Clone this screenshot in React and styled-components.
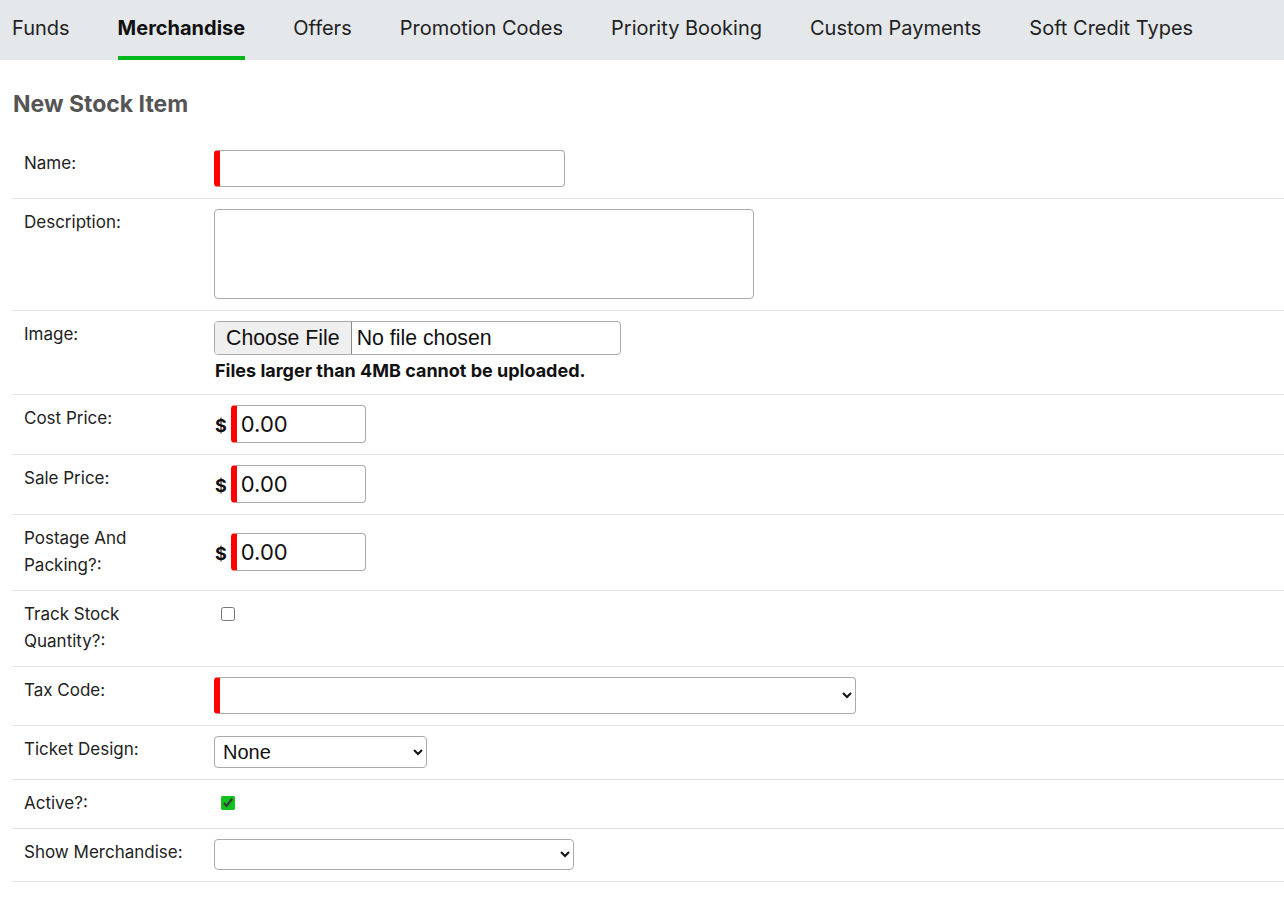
import React from "react";
import styled, { createGlobalStyle } from "styled-components";

const GlobalStyle = createGlobalStyle`
  html, body {
    margin: 0;
    padding: 0;
    background: #fff;
  }
  body {
    font-family: Inter, "Liberation Sans", Arial, sans-serif;
    color: #222;
  }
  * {
    box-sizing: border-box;
  }
`;

const TabBar = styled.ul`
  display: flex;
  gap: 48px;
  height: 60px;
  margin: 0;
  padding: 0 0 0 12px;
  list-style: none;
  background-color: #e4e8eb;
`;

const Tab = styled.li`
  display: flex;
  align-items: center;
  height: 100%;
  font-size: 20px;
  font-weight: ${(p) => (p.$active ? 700 : 400)};
  color: ${(p) => (p.$active ? "#111" : "#222")};
  border-bottom: 4px solid ${(p) => (p.$active ? "#00b81c" : "transparent")};
  white-space: nowrap;
`;

const Page = styled.div`
  padding: 0 0 0 12px;
`;

const Title = styled.h2`
  margin: 30px 0 22px 1px;
  font-size: 23px;
  font-weight: 700;
  color: #555;
`;

const FormTable = styled.div`
  display: flex;
  flex-direction: column;
`;

const Row = styled.div`
  display: grid;
  grid-template-columns: 190px 1fr;
  padding: 10px 0 11px 12px;
  border-bottom: 1px solid #e2e2e2;
`;

const Label = styled.div`
  font-size: 17px;
  line-height: 27px;
  color: #222;
  max-width: ${(p) => (p.$narrow ? "120px" : "none")};
`;

const Field = styled.div`
  display: flex;
  flex-direction: column;
  align-items: flex-start;
`;

const TextInput = styled.input`
  width: ${(p) => p.$width}px;
  height: ${(p) => p.$height || 37}px;
  padding: 0 4px;
  font-family: Inter, "Liberation Sans", Arial, sans-serif;
  font-size: 22px;
  color: #111;
  border: 1px solid #aaa;
  border-left: ${(p) => (p.$required ? "6px solid #f00" : "1px solid #aaa")};
  border-radius: 4px;
  outline: none;
`;

const TextArea = styled.textarea`
  width: 540px;
  height: 90px;
  border: 1px solid #aaa;
  border-radius: 4px;
  resize: none;
  outline: none;
`;

const FileInput = styled.input`
  width: 407px;
  height: 34px;
  font-family: "Liberation Sans", Arial, sans-serif;
  font-size: 21.3px;
  color: #111;
  border: 1px solid #aaa;
  border-radius: 4px;

  &::file-selector-button {
    height: 32px;
    margin: 0 5px 0 0;
    padding: 0 11px;
    font-family: "Liberation Sans", Arial, sans-serif;
    font-size: 21.3px;
    color: #111;
    background: #efefef;
    border: none;
    border-right: 1px solid #8a8a8a;
  }
`;

const Hint = styled.div`
  margin-top: 4px;
  margin-left: 1px;
  font-size: 18px;
  font-weight: 700;
  color: #111;
  line-height: 24px;
`;

const Money = styled.div`
  display: flex;
  align-items: center;
  gap: 4px;
`;

const Dollar = styled.span`
  padding-left: 1px;
  font-size: 18px;
  font-weight: 700;
  color: #111;
  margin-top: 2px;
`;

const Check = styled.input`
  width: 14px;
  height: 14px;
  margin: 6px 0 0 7px;
  accent-color: #12c21c;
`;

const Select = styled.select`
  width: ${(p) => p.$width}px;
  height: ${(p) => p.$height}px;
  padding: 0 4px;
  font-family: "Liberation Sans", Arial, sans-serif;
  font-size: 20px;
  color: #111;
  background: #fff;
  border: 1px solid #aaa;
  border-left: ${(p) => (p.$required ? "6px solid #f00" : "1px solid #aaa")};
  border-radius: 4px;
  outline: none;
`;

const tabs = [
  "Funds",
  "Merchandise",
  "Offers",
  "Promotion Codes",
  "Priority Booking",
  "Custom Payments",
  "Soft Credit Types",
];

const PriceRow = ({ label }) => (
  <Row>
    <Label $narrow>{label}</Label>
    <Money>
      <Dollar>$</Dollar>
      <TextInput $width={135} $height={38} $required defaultValue="0.00" />
    </Money>
  </Row>
);

export default function App() {
  return (
    <>
      <GlobalStyle />
      <TabBar>
        {tabs.map((t) => (
          <Tab key={t} $active={t === "Merchandise"}>
            {t}
          </Tab>
        ))}
      </TabBar>
      <Page>
        <Title>New Stock Item</Title>
        <FormTable>
          <Row>
            <Label>Name:</Label>
            <Field>
              <TextInput $width={351} $required />
            </Field>
          </Row>
          <Row>
            <Label>Description:</Label>
            <Field>
              <TextArea />
            </Field>
          </Row>
          <Row>
            <Label>Image:</Label>
            <Field>
              <FileInput type="file" />
              <Hint>Files larger than 4MB cannot be uploaded.</Hint>
            </Field>
          </Row>
          <PriceRow label="Cost Price:" />
          <PriceRow label="Sale Price:" />
          <PriceRow label="Postage And Packing?:" />
          <Row>
            <Label $narrow>Track Stock Quantity?:</Label>
            <Field>
              <Check type="checkbox" />
            </Field>
          </Row>
          <Row>
            <Label>Tax Code:</Label>
            <Field>
              <Select $width={642} $height={37} $required defaultValue="">
                <option value=""></option>
              </Select>
            </Field>
          </Row>
          <Row>
            <Label>Ticket Design:</Label>
            <Field>
              <Select $width={213} $height={32} defaultValue="none">
                <option value="none">None</option>
              </Select>
            </Field>
          </Row>
          <Row>
            <Label>Active?:</Label>
            <Field>
              <Check type="checkbox" defaultChecked />
            </Field>
          </Row>
          <Row>
            <Label>Show Merchandise:</Label>
            <Field>
              <Select $width={360} $height={31} defaultValue="">
                <option value=""></option>
              </Select>
            </Field>
          </Row>
        </FormTable>
      </Page>
    </>
  );
}
